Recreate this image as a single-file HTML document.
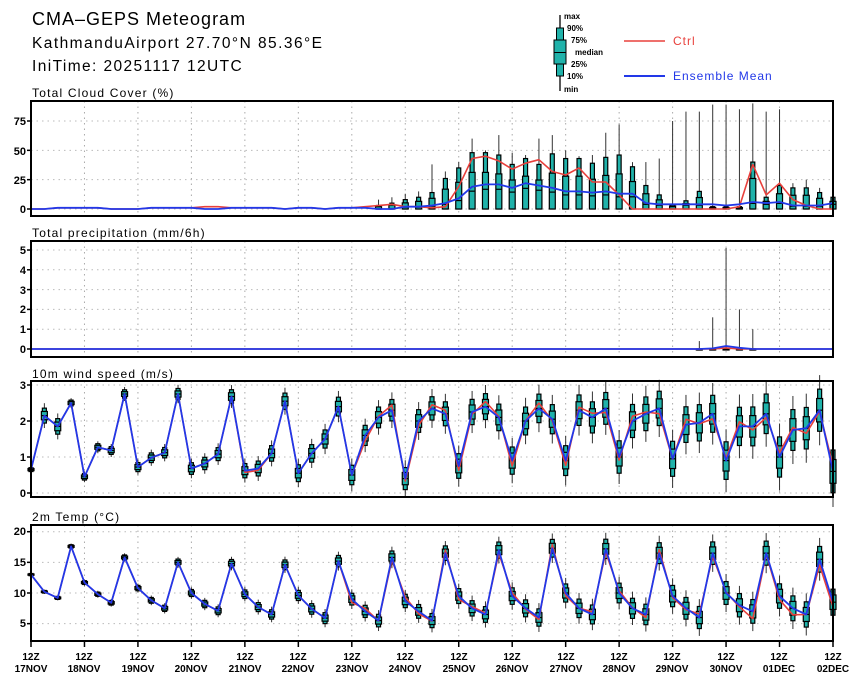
<!DOCTYPE html>
<html><head><meta charset="utf-8"><style>
html,body{margin:0;padding:0;background:#fff;}
svg{display:block;font-family:"Liberation Sans",sans-serif;}
.yl{font-size:11px;font-weight:bold;text-anchor:end;}
.xl{font-size:10px;font-weight:bold;text-anchor:middle;}
.pt{font-size:12px;letter-spacing:1.2px;}
.lg{font-size:8px;font-weight:bold;}
</style></head><body>
<svg id="s" width="860" height="679" viewBox="0 0 860 679" xmlns="http://www.w3.org/2000/svg">
<rect width="860" height="679" fill="#fff"/>
<text x="32" y="25" font-size="18" letter-spacing="1">CMA–GEPS Meteogram</text>
<text x="32" y="48" font-size="15.5" letter-spacing="1.45">KathmanduAirport 27.70°N 85.36°E</text>
<text x="32" y="71" font-size="15.5" letter-spacing="1.4">IniTime: 20251117 12UTC</text>
<!-- legend -->
<line x1="560" y1="15" x2="560" y2="91" stroke="#000" stroke-width="1.3"/>
<rect x="556.5" y="28" width="7" height="48" fill="#20b2aa" stroke="#000"/>
<rect x="554" y="40" width="12" height="24" fill="#20b2aa" stroke="#000"/>
<line x1="554" y1="52.5" x2="566" y2="52.5" stroke="#000"/>
<text class="lg" x="564" y="19">max</text>
<text class="lg" x="567" y="31">90%</text>
<text class="lg" x="571" y="43">75%</text>
<text class="lg" x="575" y="55">median</text>
<text class="lg" x="571" y="67">25%</text>
<text class="lg" x="567" y="79">10%</text>
<text class="lg" x="564" y="92">min</text>
<line x1="624" y1="41" x2="665" y2="41" stroke="#e8403c" stroke-width="1.5"/>
<text x="673" y="45" font-size="12" letter-spacing="1" fill="#e8403c">Ctrl</text>
<line x1="624" y1="76" x2="665" y2="76" stroke="#2238e8" stroke-width="2"/>
<text x="673" y="80" font-size="12" letter-spacing="1" fill="#2238e8">Ensemble Mean</text>
<!-- panel titles -->
<text class="pt" x="32" y="97">Total Cloud Cover (%)</text>
<text class="pt" x="32" y="237">Total precipitation (mm/6h)</text>
<text class="pt" x="32" y="378">10m wind speed (m/s)</text>
<text class="pt" x="32" y="521">2m Temp (°C)</text>
<!-- y labels -->
<text class="yl" x="26" y="125">75</text><text class="yl" x="26" y="155">50</text><text class="yl" x="26" y="184">25</text><text class="yl" x="26" y="213">0</text>
<text class="yl" x="26" y="254">5</text><text class="yl" x="26" y="274">4</text><text class="yl" x="26" y="294">3</text><text class="yl" x="26" y="313">2</text><text class="yl" x="26" y="333">1</text><text class="yl" x="26" y="353">0</text>
<text class="yl" x="26" y="389">3</text><text class="yl" x="26" y="425">2</text><text class="yl" x="26" y="461">1</text><text class="yl" x="26" y="497">0</text>
<text class="yl" x="26" y="535">20</text><text class="yl" x="26" y="566">15</text><text class="yl" x="26" y="597">10</text><text class="yl" x="26" y="627">5</text>
<!-- x labels -->
<g id="xl">
<text class="xl" x="31" y="660">12Z</text><text class="xl" x="31" y="672">17NOV</text>
<text class="xl" x="84" y="660">12Z</text><text class="xl" x="84" y="672">18NOV</text>
<text class="xl" x="138" y="660">12Z</text><text class="xl" x="138" y="672">19NOV</text>
<text class="xl" x="191" y="660">12Z</text><text class="xl" x="191" y="672">20NOV</text>
<text class="xl" x="245" y="660">12Z</text><text class="xl" x="245" y="672">21NOV</text>
<text class="xl" x="298" y="660">12Z</text><text class="xl" x="298" y="672">22NOV</text>
<text class="xl" x="352" y="660">12Z</text><text class="xl" x="352" y="672">23NOV</text>
<text class="xl" x="405" y="660">12Z</text><text class="xl" x="405" y="672">24NOV</text>
<text class="xl" x="459" y="660">12Z</text><text class="xl" x="459" y="672">25NOV</text>
<text class="xl" x="512" y="660">12Z</text><text class="xl" x="512" y="672">26NOV</text>
<text class="xl" x="566" y="660">12Z</text><text class="xl" x="566" y="672">27NOV</text>
<text class="xl" x="619" y="660">12Z</text><text class="xl" x="619" y="672">28NOV</text>
<text class="xl" x="672" y="660">12Z</text><text class="xl" x="672" y="672">29NOV</text>
<text class="xl" x="726" y="660">12Z</text><text class="xl" x="726" y="672">30NOV</text>
<text class="xl" x="779" y="660">12Z</text><text class="xl" x="779" y="672">01DEC</text>
<text class="xl" x="833" y="660">12Z</text><text class="xl" x="833" y="672">02DEC</text>
</g>
<g id="d"></g>
</svg>
<script>
(function(){
var NS="http://www.w3.org/2000/svg",g=document.getElementById('d');
var L=31,R=833,ST=(R-L)/60;
function el(n,a){var e=document.createElementNS(NS,n);for(var k in a)e.setAttribute(k,a[k]);g.appendChild(e);return e;}
function X(t){return L+t*ST;}
var P=[
 {top:101,bot:216,y0:209,k:88/75,ticks:[0,25,50,75]},
 {top:241,bot:357,y0:349,k:19.8,ticks:[0,1,2,3,4,5]},
 {top:381,bot:497,y0:493,k:36,ticks:[0,1,2,3]},
 {top:525,bot:641,y0:593+10*6.13,k:6.13,ticks:[5,10,15,20]}
];
function frame(p){
 for(var d=1;d<15;d++){var x=L+d*ST*4;el('line',{x1:x,y1:p.top,x2:x,y2:p.bot,stroke:'#aaa','stroke-dasharray':'1.5,4'});}
 p.ticks.forEach(function(v){var y=p.y0-v*p.k;el('line',{x1:L,y1:y,x2:R,y2:y,stroke:'#bbb','stroke-dasharray':'1.5,4'});el('line',{x1:L-4,y1:y,x2:L,y2:y,stroke:'#000','stroke-width':1.5});});
}
function rect(p){el('rect',{x:L,y:p.top,width:R-L,height:p.bot-p.top,fill:'none',stroke:'#000','stroke-width':2});}
function box(p,t,q){
 var x=X(t),Y=function(v){return p.y0-v*p.k;};
 el('line',{x1:x,y1:Y(q[0]),x2:x,y2:Y(q[6]),stroke:'#333','stroke-width':1});
 el('rect',{x:x-2,y:Y(q[5]),width:4,height:Math.max(1,Y(q[1])-Y(q[5])),fill:'#20b2aa',stroke:'#000','stroke-width':1.2});
 el('rect',{x:x-3,y:Y(q[4]),width:6,height:Math.max(1,Y(q[2])-Y(q[4])),fill:'#20b2aa',stroke:'#000','stroke-width':1.2});
 el('line',{x1:x-3,y1:Y(q[3]),x2:x+3,y2:Y(q[3]),stroke:'#000','stroke-width':1.2});
}
function line(p,arr,c,w){var s='';arr.forEach(function(v,t){s+=(t?'L':'M')+X(t).toFixed(1)+' '+(p.y0-v*p.k).toFixed(1);});el('path',{d:s,fill:'none',stroke:c,'stroke-width':w,'stroke-linejoin':'round'});}
P.forEach(frame);
var cm=[0,0,1,1,1,1,0,0,0,1,1,1,1,0,0,1,1,1,1,0,1,1,0,1,1,1,0,0,2,2,3,5,9,19,21,21,18,22,20,18,15,15,14,15,13,13,5,4,4,4,4,4,3,4,6,5,6,3,3,3,5];
var cc=[0,0,1,1,1,1,0,0,0,1,1,1,1,2,2,1,1,1,1,0,1,1,0,1,1,2,3,4,2,2,1,2,19,43,45,41,34,39,42,32,29,35,23,23,12,0,0,0,0,0,0,0,0,2,38,12,22,8,3,0,0];
var p90=[0,0,0,0,0,0,0,0,0,0,0,0,0,0,0,0,0,0,0,0,0,0,0,0,0,0,3,5,8,10,14,26,35,48,48,46,38,43,38,47,43,43,39,44,46,36,20,12,4,7,15,2,2,2,40,10,20,18,18,14,10];
var cmax=[1,1,2,2,2,2,1,1,2,3,2,2,2,1,1,2,2,2,2,1,2,2,1,2,2,4,8,10,13,15,38,32,40,60,50,63,48,46,60,63,50,45,46,65,72,40,40,43,75,83,83,89,89,85,90,83,85,22,25,18,15];
var p=P[0];
for(var t=0;t<=60;t++){var a=p90[t];if(a<1)continue;box(p,t,[0,0,0,Math.min(a*0.5,cm[t]*0.8),a*0.65,a,cmax[t]]);}
line(p,cc,'#e8403c',1.6);line(p,cm,'#2238e8',1.8);
p=P[1];
var pm=[],pc=[];for(t=0;t<=60;t++){pm.push(0);pc.push(0);}
pm[51]=0.03;pm[52]=0.15;pm[53]=0.06;pc[52]=0.05;
box(p,50,[0,0,0,0,0,0,0.4]);box(p,51,[0,0,0,0,0,0,1.6]);box(p,52,[0,0,0,0,0,0.05,5.1]);box(p,53,[0,0,0,0,0,0,2]);box(p,54,[0,0,0,0,0,0,1]);
line(p,pc,'#e8403c',1.5);line(p,pm,'#2238e8',1.8);
p=P[2];
var wm=[0.65,2.15,1.85,2.5,0.45,1.27,1.18,2.75,0.72,0.98,1.12,2.75,0.68,0.82,1.08,2.68,0.62,0.68,1.1,2.55,0.55,1.1,1.5,2.4,0.5,1.6,2.1,2.3,0.4,2.0,2.35,2.2,0.75,2.25,2.4,2.1,0.9,2.0,2.35,2.05,0.9,2.3,2.1,2.35,1.0,2.0,2.2,2.35,0.95,1.9,1.95,2.2,0.9,1.85,1.85,2.2,1.0,1.75,1.8,2.3,0.6];
var wc=wm.map(function(v,t){return v+(t>24?(Math.sin(t*1.7)*0.15):(t==16||t==17?-0.05:0));});
for(t=0;t<=60;t++){var s=0.03+t*0.005+(t==1||t==2?0.08:0);box(p,t,[wm[t]-3*s,wm[t]-1.8*s,wm[t]-s,wm[t],wm[t]+s,wm[t]+1.8*s,wm[t]+3*s]);}
line(p,wc,'#e8403c',1.6);line(p,wm,'#2238e8',1.8);
p=P[3];
var tm=[13,10.2,9.2,17.6,11.7,9.8,8.4,15.8,10.8,8.8,7.5,15.0,10.0,8.2,7.1,14.8,9.8,7.7,6.5,14.6,9.6,7.4,5.9,15.2,9.0,7.0,5.5,15.8,8.7,7.0,5.5,16.5,9.5,7.5,6.5,17.0,9.5,7.5,6.0,17.3,10,7.5,6.5,17.2,10,7.5,6.5,16.5,9.5,7.5,6.0,16.5,10,8,7,16.5,9.5,7.5,6.5,15.5,8.5];
var tc=tm.map(function(v,t){return t<24?v:v+Math.sin(t*2.3)*0.6-(t>52?0.6:0);});
for(t=0;t<=60;t++){var s2=0.1+t*0.018;box(p,t,[tm[t]-3*s2,tm[t]-1.8*s2,tm[t]-s2,tm[t],tm[t]+s2,tm[t]+1.8*s2,tm[t]+3*s2]);}
line(p,tc,'#e8403c',1.6);line(p,tm,'#2238e8',1.8);
for(var d=0;d<=15;d++){var x=L+d*ST*4;el('line',{x1:x,y1:641,x2:x,y2:647,stroke:'#000','stroke-width':1.5});}
P.forEach(rect);
})();
</script>
</body></html>
